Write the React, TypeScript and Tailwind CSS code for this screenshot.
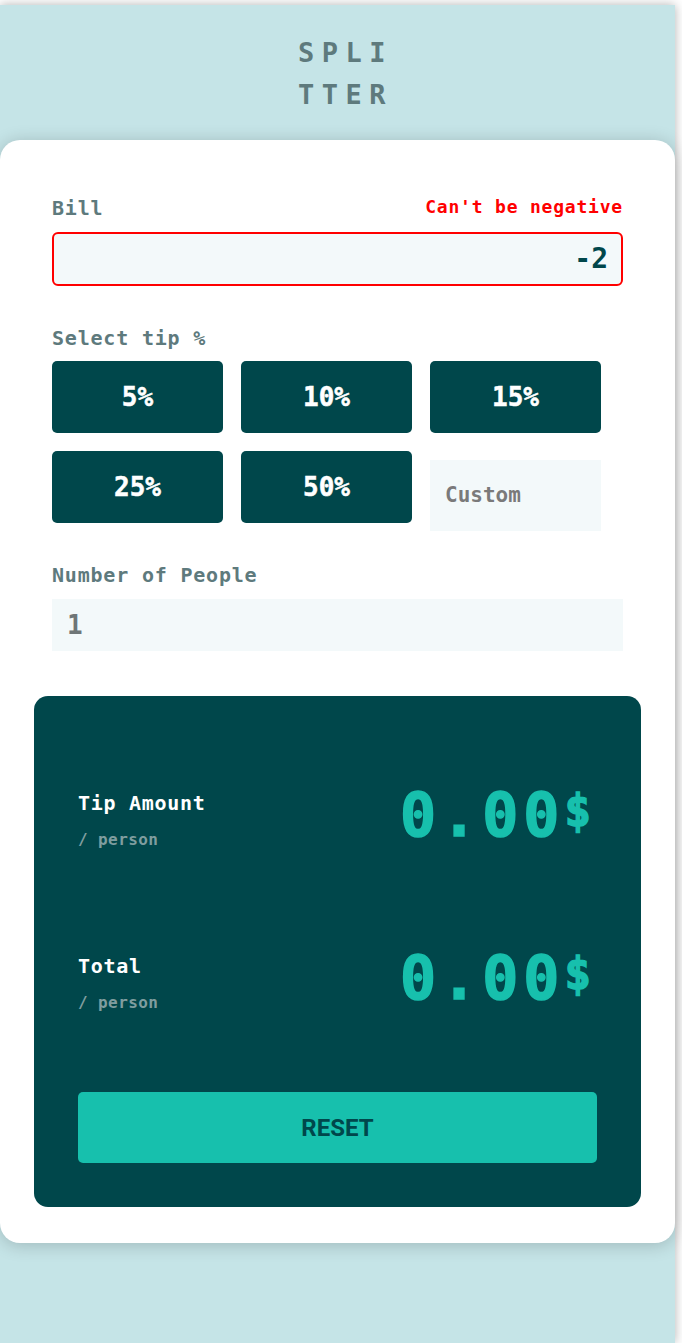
const tips = ["5%", "10%", "15%", "25%", "50%"];

const ResultRow = ({ label }: { label: string }) => {
  return (
    <div className="flex justify-between items-start">
      <div className="flex flex-col mt-[6px]">
        <span className="text-white font-bold text-[20px] leading-[24px] tracking-[0.7px]">
          {label}
        </span>
        <span className="text-[#7f9d9f] font-bold text-[16px] leading-[20px] tracking-[0.4px] mt-[15px]">
          / person
        </span>
      </div>
      <div className="text-[#17c0ad] font-bold flex items-start pr-[6px] [-webkit-text-stroke:1.5px_#17c0ad]">
        <span className="text-[60px] leading-none tracking-[5px]">0.00</span>
        <span className="text-[44px] leading-none mt-[4px]">$</span>
      </div>
    </div>
  );
};

export default function App() {
  return (
    <div className="min-h-screen bg-white font-['DejaVu_Sans_Mono',monospace]">
      <div className="mt-[5px] w-[675px] min-h-[1338px] bg-[#c5e4e7] shadow-[0_0_10px_rgba(0,0,0,0.3)] pt-[27px]">
        <div className="flex justify-center pl-[16px]">
          <h1 className="w-[110px] break-all text-center text-[27px] leading-[42px] tracking-[7.5px] font-bold text-[#5e7a7d]">
            SPLITTER
          </h1>
        </div>

        <div className="mt-[24px] bg-white rounded-[20px] shadow-[0_2px_18px_rgba(0,0,0,0.2)] px-[52px] pt-[56px] pb-[36px]">
          <div className="flex justify-between items-baseline">
            <label className="text-[20px] leading-[24px] font-bold tracking-[0.8px] text-[#5e7a7d]">
              Bill
            </label>
            <span className="text-[18px] leading-[22px] font-bold tracking-[0.8px] text-[#ff0000] relative -top-[2px]">
              Can't be negative
            </span>
          </div>
          <div className="mt-[12px] h-[54px] rounded-md border-2 border-[#ff0000] bg-[#f3f9fa] flex items-center justify-end pr-[13px]">
            <span className="text-[28px] font-bold text-[#00474b]">-2</span>
          </div>

          <label className="block mt-[40px] text-[20px] leading-[24px] font-bold tracking-[0.8px] text-[#5e7a7d]">
            Select tip %
          </label>
          <div className="mt-[11px] grid grid-cols-[171px_171px_171px] gap-x-[18px] gap-y-[18px]">
            {tips.map((t) => (
              <button
                key={t}
                className="h-[72px] rounded-[5px] bg-[#00474b] text-white font-bold text-[26px] [-webkit-text-stroke:0.5px_#ffffff]"
              >
                {t}
              </button>
            ))}
            <div className="mt-[9px] h-[71px] bg-[#f3f9fa] flex items-center pl-[15px]">
              <span className="text-[21px] font-bold text-[#7a7a7a]">Custom</span>
            </div>
          </div>

          <label className="block mt-[32px] text-[20px] leading-[24px] font-bold tracking-[0.8px] text-[#5e7a7d]">
            Number of People
          </label>
          <div className="mt-[12px] h-[52px] bg-[#f3f9fa] flex items-center pl-[15px]">
            <span className="text-[26px] font-bold text-[#6f7677]">1</span>
          </div>

          <div className="mt-[45px] -mx-[18px] bg-[#00474b] rounded-[14px] px-[44px] pt-[89px] pb-[44px]">
            <ResultRow label="Tip Amount" />
            <div className="mt-[98px]">
              <ResultRow label="Total" />
            </div>
            <button className="mt-[79px] w-full h-[71px] rounded-[5px] bg-[#17c0ad] text-[#00474b] font-['Roboto',sans-serif] font-bold text-[24px]">
              RESET
            </button>
          </div>
        </div>
      </div>
    </div>
  );
}
